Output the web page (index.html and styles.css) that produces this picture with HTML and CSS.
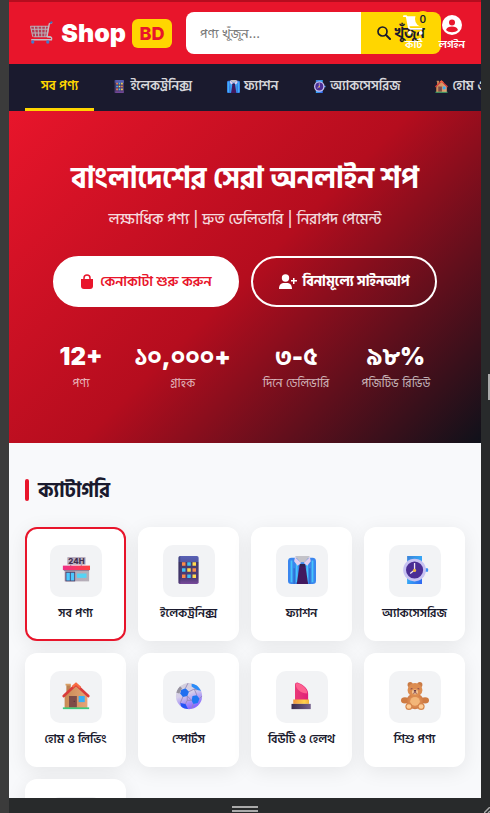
FILE: index.html
```html
<!DOCTYPE html>
<html lang="bn">
<head>
    <meta charset="UTF-8">
    <meta name="viewport" content="width=device-width, initial-scale=1.0">
    <title>Shop BD</title>
    <link rel="stylesheet" href="styles.css">
</head>
<body>

    <!-- Icon Sprite -->
    <svg class="sprite" width="0" height="0" aria-hidden="true">
        <defs>
            <linearGradient id="g-roof" x1="0" x2="1"><stop offset="0" stop-color="#ee2f87"/><stop offset="1" stop-color="#ff4440"/></linearGradient>
            <linearGradient id="g-wall" x1="0" x2="1"><stop offset="0" stop-color="#b7a4b9"/><stop offset="1" stop-color="#b5b0b8"/></linearGradient>
            <linearGradient id="g-phone" x1="0" y1="0" x2="0" y2="1"><stop offset="0" stop-color="#5860b5"/><stop offset=".2" stop-color="#5358a5"/><stop offset=".22" stop-color="#433b6b"/><stop offset=".8" stop-color="#503a78"/><stop offset="1" stop-color="#7a4a9c"/></linearGradient>
            <linearGradient id="g-strap" x1="0" y1="0" x2="1" y2="1"><stop offset="0" stop-color="#3b82d8"/><stop offset=".5" stop-color="#35a5f5"/><stop offset="1" stop-color="#2f62f0"/></linearGradient>
            <linearGradient id="g-ball" x1="0" y1="0" x2=".4" y2="1"><stop offset="0" stop-color="#d2d0d8"/><stop offset=".5" stop-color="#d6cfea"/><stop offset="1" stop-color="#8a6cff"/></linearGradient>
            <linearGradient id="g-house" x1="0" x2="1"><stop offset="0" stop-color="#c98a54"/><stop offset="1" stop-color="#e5a477"/></linearGradient>
            <linearGradient id="g-lip" x1="0" x2="1"><stop offset="0" stop-color="#e93a78"/><stop offset="1" stop-color="#e01f78"/></linearGradient>
            <linearGradient id="g-gold" x1="0" x2="1"><stop offset="0" stop-color="#f0943e"/><stop offset=".7" stop-color="#ffd24a"/><stop offset="1" stop-color="#f3b23c"/></linearGradient>
            <linearGradient id="g-base" x1="0" x2="1"><stop offset="0" stop-color="#3b2c4c"/><stop offset="1" stop-color="#74618c"/></linearGradient>
            <radialGradient id="g-bear"><stop offset="0" stop-color="#f0a868"/><stop offset="1" stop-color="#cf7a45"/></radialGradient>
            <clipPath id="c-ball"><circle cx="16" cy="16" r="15"/></clipPath>
        </defs>

        <symbol id="i-trolley" viewBox="0 0 32 32">
            <path d="M2 7h24l-2 14H6z" fill="#8c5c74" opacity=".55"/>
            <path d="M2 7h25M3 11h23M4 16h21M6 21h23M7 7l2 14M12 7l1 14M17 7v14M22 7l-1 14M2 7l3 14M26 7l-2 14" stroke="#b9b0b8" stroke-width="1.4" fill="none"/>
            <path d="M31 2l-4 2-3 17M24 21c6 0 7 1 6 4H3" stroke="#c4bfc6" stroke-width="1.8" fill="none"/>
            <path d="M28 3l3-2" stroke="#3f6fb4" stroke-width="2.4"/>
            <circle cx="5" cy="28" r="2.2" fill="#4379cc"/><circle cx="25" cy="28" r="2.2" fill="#4379cc"/>
        </symbol>

        <symbol id="i-store" viewBox="0 0 32 32">
            <path d="M10 9v5M22 9v5" stroke="#8b8294" stroke-width="1"/>
            <rect x="6" y="1" width="21" height="9" rx="1" fill="#b9aebf"/>
            <text x="16.500" y="9" class="store-sign">24H</text>
            <path d="M3 15h28v14H3z" fill="url(#g-wall)"/>
            <path d="M1 11h31v5H1z" fill="url(#g-roof)"/>
            <path d="M2 16h29v1H2z" fill="#8e7894"/>
            <path d="M4 18h11v11H4z" fill="#504169"/>
            <path d="M5 19h4v9H5zM10 19h4v9h-4z" fill="#4cc8ff"/>
            <path d="M17 20h11v5H17z" fill="#55d4f5"/>
        </symbol>

        <symbol id="i-phone" viewBox="0 0 32 32">
            <rect x="4" y="0" width="23" height="32" rx="2" fill="url(#g-phone)"/>
            <path d="M4 2v28c0 1 0 2 2 2V0C5 0 4 1 4 2z" fill="#34305c" opacity=".5"/>
            <path d="M8 7h4v4H8zM20 14h4v4h-4zM8 21h4v4H8z" fill="#f98a4b"/>
            <path d="M14 7h4v4h-4zM8 14h4v4H8zM14 21h4v4h-4z" fill="#3fc0f4"/>
            <path d="M20 7h4v4h-4zM14 14h4v4h-4zM20 21h4v4h-4z" fill="#ffd950"/>
        </symbol>

        <symbol id="i-shirt" viewBox="0 0 32 32">
            <path d="M4 2h24c3 0 4 2 4 4v22c0 3-1 4-4 4H4c-3 0-4-1-4-4V6c0-2 1-4 4-4z" fill="#3a86ee"/>
            <path d="M4 5v25M10 5v25M22 5v25M28 5v25" stroke="#45c4fa" stroke-width="2"/>
            <path d="M7 14v18M25 14v18" stroke="#2862bd" stroke-width="1"/>
            <path d="M8 0h17l-6 7h-5z" fill="#c3c2c8"/>
            <path d="M8 1l7 7-4 3-4-5zM25 1l-7 7 4 3 4-5z" fill="#e4cfee"/>
            <path d="M14 9h5l1 3 3 20H10l3-20z" fill="#42195e"/>
            <path d="M14 9h5l1 3h-7z" fill="#2e214f"/>
        </symbol>

        <symbol id="i-watch" viewBox="0 0 32 32">
            <path d="M7 0h17v7H7zM7 25h17v7H7z" fill="url(#g-strap)"/>
            <rect x="27" y="14" width="4" height="4" rx="1" fill="#3d92f5"/>
            <circle cx="15.500" cy="16" r="13" fill="#c7c2f2"/>
            <circle cx="15.500" cy="16" r="9.800" fill="#4b2e94"/>
            <path d="M15.500 8v8l-5 4" stroke="#f0e7f6" stroke-width="1.500" fill="none"/>
            <circle cx="15.500" cy="16.500" r="1.800" fill="#f5bc43"/>
        </symbol>

        <symbol id="i-house" viewBox="0 0 32 32">
            <path d="M5 3h5v12H5z" fill="#bd8150"/>
            <path d="M4 2h6v2H4z" fill="#d9a067"/>
            <path d="M3 16L16 3l13 13v14H3z" fill="url(#g-house)"/>
            <path d="M2 16L16 3l14 13" stroke="#d93c3b" stroke-width="3" fill="none" stroke-linecap="round"/>
            <path d="M12 5.500L16 2l5 4.500" stroke="#fa6d42" stroke-width="2.500" fill="none"/>
            <path d="M8 16h9v13H8z" fill="#7e4c48"/>
            <circle cx="14" cy="22" r=".7" fill="#4a2a32"/>
            <path d="M19 16h7v7h-7z" fill="#38aef4"/>
            <path d="M1 29h30v2H1z" fill="#3bcb7b"/>
        </symbol>

        <symbol id="i-ball" viewBox="0 0 32 32">
            <circle cx="16" cy="16" r="15" fill="url(#g-ball)"/>
            <g clip-path="url(#c-ball)">
                <path d="M7 9l5-2 4 4-2 5-5 1-3-4z" fill="#1f6ff0"/>
                <path d="M20 16l5-1 3 4-2 5-5 1-2-4z" fill="#1f78f2"/>
                <path d="M19 2l6 1 5 7-5-1-6-4z" fill="#2a8cf8"/>
                <path d="M6 24l6 1 3 6H8z" fill="#2353f5"/>
                <path d="M1 12l4-8 3 3-3 6z" fill="#96929f"/>
                <path d="M12 7l3-6M16 11l6-3 3 1M22 8l3 7M14 16l5 5M12 25l2-4 5 0M9 17l-3 7M21 25l-2 6M28 19l3-3M14 21v-5" stroke="#9387b8" stroke-width="1" fill="none"/>
            </g>
        </symbol>

        <symbol id="i-lipstick" viewBox="0 0 32 32">
            <path d="M8 21V3c0-2 2-3 4-2 6 2 11 7 11 12v8z" fill="url(#g-lip)"/>
            <path d="M9 3c0-2 2-2 4-1 6 3 9 7 9 11-7 0-13-5-13-10z" fill="#fd6190"/>
            <path d="M6 20h18v5H6z" fill="url(#g-gold)"/>
            <path d="M4 25h22v6H4z" fill="url(#g-base)"/>
        </symbol>

        <symbol id="i-bear" viewBox="0 0 32 32">
            <circle cx="10.500" cy="3" r="3" fill="#c97a45"/><circle cx="21.500" cy="3" r="3" fill="#c97a45"/>
            <ellipse cx="4.500" cy="21" rx="4.500" ry="3.500" fill="#cf7b42"/><ellipse cx="27.500" cy="21" rx="4.500" ry="3.500" fill="#cf7b42"/>
            <ellipse cx="16" cy="22" rx="10" ry="9" fill="url(#g-bear)"/>
            <ellipse cx="16" cy="9" rx="8.500" ry="8" fill="#dc8c50"/>
            <ellipse cx="16" cy="22" rx="5.500" ry="5" fill="#f3b679"/>
            <ellipse cx="16" cy="11.500" rx="3.500" ry="2.800" fill="#f2c394"/>
            <circle cx="9" cy="28" r="4" fill="#d5864d"/><circle cx="23" cy="28" r="4" fill="#d5864d"/>
            <circle cx="9" cy="28" r="2.700" fill="#ffcd96"/><circle cx="23" cy="28" r="2.700" fill="#ffcd96"/>
            <ellipse cx="16" cy="10" rx="1.500" ry="1" fill="#59293e"/>
            <path d="M11 8l2-.5M19 7.500l2 .5M14 13l2-1 2 1" stroke="#70364a" stroke-width="1" fill="none"/>
        </symbol>
    </svg>

    <div class="screen">

        <!-- Header -->
        <header class="header">
            <a class="logo" href="#">
                <svg class="logo-icon"><use href="#i-trolley"/></svg>
                <span class="logo-name">Shop</span>
                <span class="logo-badge">BD</span>
            </a>
            <div class="search-area">
                <form class="search">
                    <input type="text" aria-label="পণ্য খুঁজুন" placeholder="পণ্য খুঁজুন...">
                    <button type="button">
                        <svg width="14" height="14" viewBox="0 0 14 14"><circle cx="5.500" cy="5.500" r="4.500" fill="none" stroke="currentColor" stroke-width="1.700"/><path d="M9 9l4 4" stroke="currentColor" stroke-width="2" stroke-linecap="round"/></svg>
                        খুঁজুন
                    </button>
                </form>
            </div>
            <div class="actions">
                <a class="action" href="#">
                    <svg width="22" height="20" viewBox="0 0 576 512" fill="currentColor"><path d="M0 24C0 10 10 0 24 0h46c21 0 40 12 49 30h412c26 0 45 25 38 50l-41 152c-8 32-38 54-71 54H171l5 28c2 12 12 20 24 20h288c13 0 24 11 24 24s-11 24-24 24H200c-35 0-65-25-71-58L77 54c-1-4-4-6-7-6H24C10 48 0 37 0 24z"/><circle cx="176" cy="464" r="48"/><circle cx="464" cy="464" r="48"/></svg>
                    <span>কার্ট</span>
                    <span class="count">0</span>
                </a>
                <a class="action" href="#">
                    <svg width="20" height="20" viewBox="0 0 20 20"><circle cx="10" cy="10" r="10" fill="currentColor"/><circle cx="10" cy="7.500" r="3" fill="#e8152b"/><path d="M4 15c1-3 3-3.500 6-3.500s5 .5 6 3.500c-3 3-9 3-12 0z" fill="#e8152b"/></svg>
                    <span>লগইন</span>
                </a>
            </div>
        </header>

        <!-- Category Nav -->
        <nav class="nav">
            <a class="active" href="#">সব পণ্য</a>
            <a href="#"><svg><use href="#i-phone"/></svg>ইলেকট্রনিক্স</a>
            <a href="#"><svg><use href="#i-shirt"/></svg>ফ্যাশন</a>
            <a href="#"><svg><use href="#i-watch"/></svg>অ্যাকসেসরিজ</a>
            <a href="#"><svg><use href="#i-house"/></svg>হোম ও লিভিং</a>
        </nav>

        <!-- Hero Section -->
        <section class="hero">
            <h1>বাংলাদেশের সেরা অনলাইন শপ</h1>
            <p class="tagline">লক্ষাধিক পণ্য | দ্রুত ডেলিভারি | নিরাপদ পেমেন্ট</p>
            <div class="hero-buttons">
                <button class="btn btn-primary" type="button">
                    <svg width="14" height="15" viewBox="0 0 14 15"><path d="M1 5h12v7c0 2-1 3-3 3H4c-2 0-3-1-3-3z" fill="currentColor"/><path d="M4 7V4a3 3 0 0 1 6 0v3" fill="none" stroke="currentColor" stroke-width="1.500"/></svg>
                    কেনাকাটা শুরু করুন
                </button>
                <button class="btn btn-outline" type="button">
                    <svg width="18" height="15" viewBox="0 0 18 15"><circle cx="6.500" cy="4" r="3.700" fill="currentColor"/><path d="M0 15c0-4 2-6 5-6h3c3 0 5 2 5 6zM14 4h1.500v2H18v1.500h-2.500V10H14V7.500h-2V6h2z" fill="currentColor"/></svg>
                    বিনামূল্যে সাইনআপ
                </button>
            </div>
            <div class="stats">
                <div class="stat"><strong>12+</strong><span>পণ্য</span></div>
                <div class="stat"><strong>১০,০০০+</strong><span>গ্রাহক</span></div>
                <div class="stat"><strong>৩-৫</strong><span>দিনে ডেলিভারি</span></div>
                <div class="stat"><strong>৯৮%</strong><span>পজিটিভ রিভিউ</span></div>
            </div>
        </section>

        <!-- Categories -->
        <section class="categories">
            <h2>ক্যাটাগরি</h2>
            <div class="grid">
                <a class="card selected" href="#"><span class="card-icon"><svg><use href="#i-store"/></svg></span>সব পণ্য</a>
                <a class="card" href="#"><span class="card-icon"><svg><use href="#i-phone"/></svg></span>ইলেকট্রনিক্স</a>
                <a class="card" href="#"><span class="card-icon"><svg><use href="#i-shirt"/></svg></span>ফ্যাশন</a>
                <a class="card" href="#"><span class="card-icon"><svg><use href="#i-watch"/></svg></span>অ্যাকসেসরিজ</a>
                <a class="card" href="#"><span class="card-icon"><svg><use href="#i-house"/></svg></span>হোম ও লিভিং</a>
                <a class="card" href="#"><span class="card-icon"><svg><use href="#i-ball"/></svg></span>স্পোর্টস</a>
                <a class="card" href="#"><span class="card-icon"><svg><use href="#i-lipstick"/></svg></span>বিউটি ও হেলথ</a>
                <a class="card" href="#"><span class="card-icon"><svg><use href="#i-bear"/></svg></span>শিশু পণ্য</a>
                <div class="card"><span class="card-icon"></span></div>
            </div>
        </section>
    </div>

    <!-- Resize Handles -->
    <div class="side"><span class="grip-side"></span></div>
    <div class="bottom">
        <span class="grip-bottom"></span>
        <svg class="grip-corner" width="6" height="6" viewBox="0 0 6 6"><path d="M0 6l6-6M4 6l2-2" stroke="#aaa" stroke-width="1.500"/></svg>
    </div>

</body>
</html>
```

FILE: styles.css
```css
* {
    box-sizing: border-box;
    margin: 0;
    padding: 0;
}

body {
    display: grid;
    grid-template-columns: minmax(0, 1fr) 9px;
    grid-template-rows: minmax(0, 1fr) 15px;
    height: 100vh;
    border-left: 9px solid #3b3b3b;
    background: #282a2b;
    color: #1a1a2e;
    font-family: Inter, "Hind Siliguri", "Noto Sans Bengali", "Noto Sans", sans-serif;
    overflow: hidden;
}

a {
    color: inherit;
    text-decoration: none;
}

button, input {
    font-family: inherit;
    border: none;
}

.sprite {
    position: absolute;
}

.store-sign {
    font-size: 9px;
    font-weight: 800;
    fill: #43304f;
    text-anchor: middle;
}

.screen {
    overflow: hidden;
    background: #f8f9fb;
}

/* Header */
.header {
    display: flex;
    align-items: center;
    gap: 14px;
    height: 64px;
    padding: 0 16px 0 19px;
    background: #e8152b;
    border-top: 2px solid #b50d1e;
}

.logo {
    display: flex;
    align-items: center;
    gap: 6px;
    color: #fff;
    font-weight: 900;
}

.logo-icon {
    width: 26px;
    height: 24px;
}

.logo-name {
    width: 66px;
    font-size: 25px;
    line-height: 32px;
    text-align: right;
}

.logo-badge {
    width: 40px;
    border-radius: 6px;
    background: #ffd600;
    color: #e8152b;
    font-size: 18px;
    font-weight: 800;
    line-height: 29px;
    text-align: center;
}

/* The search form keeps its width and slides under the actions */
.search-area {
    flex: 1;
    min-width: 0;
}

.search {
    display: flex;
    width: 255px;
    height: 42px;
    border-radius: 8px;
    overflow: hidden;
}

.search input {
    flex: 1;
    min-width: 0;
    padding: 0 14px;
    background: #fff;
    font-size: 13px;
}

.search input::placeholder {
    color: #757575;
}

.search button {
    display: flex;
    align-items: center;
    justify-content: center;
    gap: 3px;
    width: 80px;
    background: #ffd600;
    color: #1a1a2e;
    font-size: 14px;
    font-weight: 700;
}

.actions {
    display: flex;
    gap: 14px;
    color: #fff;
    z-index: 1;
}

.action {
    position: relative;
    display: flex;
    flex-direction: column;
    align-items: center;
    gap: 1px;
    font-size: 11px;
    font-weight: 600;
    line-height: 16px;
}

.count {
    position: absolute;
    top: -4px;
    right: -6px;
    width: 16px;
    border-radius: 50%;
    background: #ffd600;
    color: #1a1a2e;
    font-size: 10px;
    text-align: center;
}

/* Category Nav */
.nav {
    display: flex;
    gap: 3px;
    height: 47px;
    padding: 0 16px;
    background: #1a1a2e;
    overflow: hidden;
}

.nav a {
    display: flex;
    flex-shrink: 0;
    align-items: center;
    gap: 4px;
    padding: 0 16px;
    border-bottom: 3px solid transparent;
    color: #d6d6da;
    font-size: 13px;
    font-weight: 600;
    white-space: nowrap;
}

.nav a.active {
    border-color: #ffd600;
    color: #ffd600;
}

.nav svg {
    width: 13px;
    height: 13px;
}

/* Hero Section */
.hero {
    height: 332px;
    padding: 48px 16px 0;
    background: linear-gradient(135deg, #e8152b 0%, #b50d1e 50%, #0f111a 100%);
    color: #fff;
    text-align: center;
}

.hero h1 {
    font-size: 29px;
    line-height: 38px;
    white-space: nowrap;
}

.tagline {
    margin-top: 10px;
    color: rgba(255, 255, 255, 0.85);
    font-size: 15px;
    font-weight: 500;
    line-height: 24px;
}

.hero-buttons {
    display: flex;
    justify-content: center;
    gap: 12px;
    margin-top: 25px;
}

.btn {
    display: flex;
    align-items: center;
    justify-content: center;
    gap: 6px;
    width: 186px;
    height: 51px;
    border: 2px solid #fff;
    border-radius: 26px;
    font-size: 14px;
    font-weight: 700;
    white-space: nowrap;
}

.btn-primary {
    background: #fff;
    color: #e8152b;
    font-weight: 600;
}

.btn-outline {
    background: transparent;
    color: #fff;
}

.stats {
    display: flex;
    justify-content: center;
    gap: 32px;
    margin-top: 34px;
}

.stat strong {
    display: block;
    font-size: 24px;
    font-weight: 900;
    line-height: 32px;
}

.stat span {
    display: block;
    color: rgba(255, 255, 255, 0.7);
    font-size: 12px;
    line-height: 20px;
    white-space: nowrap;
}

/* Categories */
.categories {
    padding: 32px 16px;
}

.categories h2 {
    display: flex;
    align-items: center;
    gap: 9px;
    margin-bottom: 22px;
    font-size: 20px;
    line-height: 30px;
}

.categories h2::before {
    content: "";
    width: 4px;
    height: 22px;
    border-radius: 2px;
    background: #e8152b;
}

.grid {
    display: grid;
    grid-template-columns: repeat(4, minmax(0, 1fr));
    gap: 12px;
}

.card {
    display: flex;
    flex-direction: column;
    align-items: center;
    gap: 6px;
    height: 114px;
    padding-top: 16px;
    border: 2px solid transparent;
    border-radius: 12px;
    background: #fff;
    background-clip: border-box;
    box-shadow: 0 4px 20px rgba(0, 0, 0, 0.08);
    font-size: 12px;
    font-weight: 600;
    line-height: 20px;
    white-space: nowrap;
}

.card.selected {
    border-color: #e8152b;
}

.card-icon {
    display: grid;
    place-items: center;
    width: 52px;
    height: 52px;
    border-radius: 10px;
    background: #f2f3f5;
}

.card-icon svg {
    width: 28px;
    height: 28px;
    margin-bottom: 2px;
}

/* Resize Handles */
.side {
    display: flex;
    align-items: center;
    justify-content: flex-end;
    padding-bottom: 24px;
}

.grip-side {
    width: 2px;
    height: 26px;
    background: #aaa;
}

.bottom {
    position: relative;
    display: flex;
    grid-column: 1 / -1;
    align-items: center;
    justify-content: center;
    padding-top: 6px;
}

.grip-bottom {
    width: 26px;
    height: 6px;
    margin-right: 9px;
    border-top: 2px solid #aaa;
    border-bottom: 2px solid #aaa;
}

.grip-corner {
    position: absolute;
    right: 0;
    bottom: 0;
}
```
